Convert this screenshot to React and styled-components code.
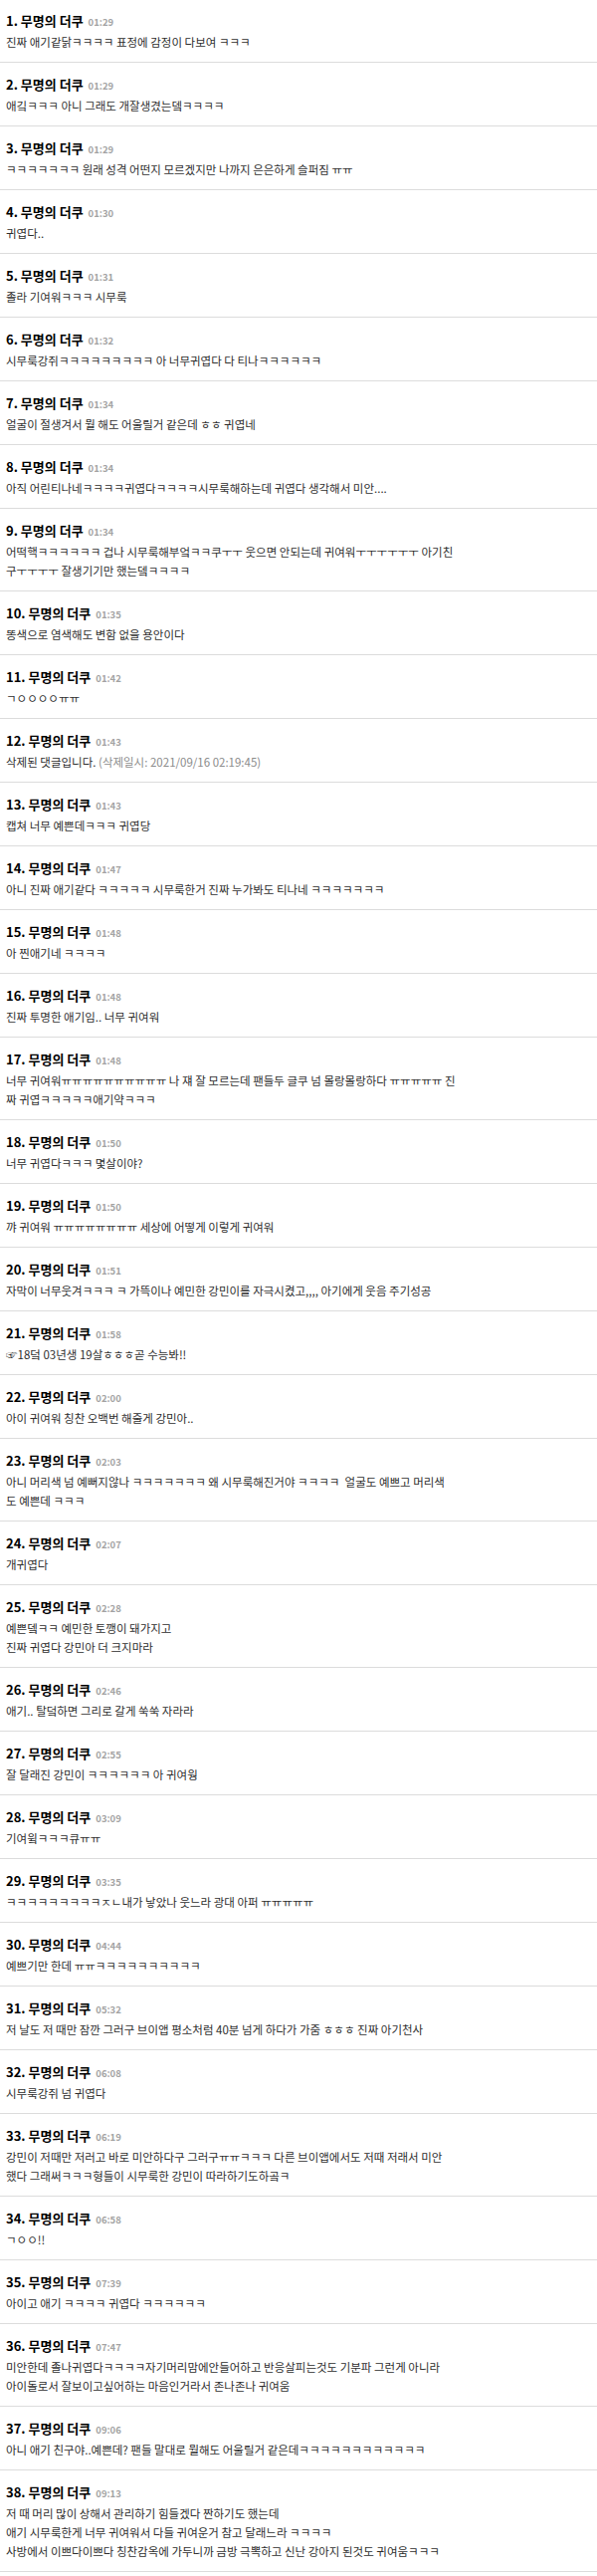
import React from 'react';
import styled, { createGlobalStyle } from 'styled-components';

const GlobalStyle = createGlobalStyle`
    body {
        margin: 0;
        background: #fff;
        font-family: "Noto Sans CJK KR", "Noto Sans", sans-serif;
    }
`;

const CommentList = styled.ul`
    list-style: none;
    margin: 0;
    padding: 0;
`;

const CommentItem = styled.li`
    padding: 12px 6px 10px;
    border-bottom: 1px solid #dcdcdc;

    &:first-child {
        padding-top: 11px;
    }
`;

const CommentHeader = styled.div`
    display: flex;
    align-items: baseline;
    height: 20px;
    line-height: 20px;
`;

const Writer = styled.span`
    font-size: 13px;
    font-weight: 700;
    color: #000;
`;

const WrittenAt = styled.span`
    margin-left: 5px;
    font-size: 9.5px;
    font-weight: 700;
    color: #a3a3a3;
`;

const CommentBody = styled.div`
    margin-top: 2px;
    font-size: 11.5px;
    line-height: 19px;
    color: #2e2e2e;
    white-space: pre;
`;

const DeletedAt = styled.span`
    color: #8c8c8c;
`;

const comments = [
    { time: '01:29', lines: ['진짜 애기같닭ㅋㅋㅋㅋ 표정에 감정이 다보여 ㅋㅋㅋ'] },
    { time: '01:29', lines: ['애깈ㅋㅋㅋ 아니 그래도 개잘생겼는뎈ㅋㅋㅋㅋ'] },
    { time: '01:29', lines: ['ㅋㅋㅋㅋㅋㅋㅋ 원래 성격 어떤지 모르겠지만 나까지 은은하게 슬퍼짐 ㅠㅠ'] },
    { time: '01:30', lines: ['귀엽다..'] },
    { time: '01:31', lines: ['졸라 기여워ㅋㅋㅋ 시무룩'] },
    { time: '01:32', lines: ['시무룩강쥐ㅋㅋㅋㅋㅋㅋㅋㅋㅋ 아 너무귀엽다 다 티나ㅋㅋㅋㅋㅋㅋ'] },
    { time: '01:34', lines: ['얼굴이 절생겨서 뭘 해도 어울릴거 같은데 ㅎㅎ 귀엽네'] },
    { time: '01:34', lines: ['아직 어린티나네ㅋㅋㅋㅋ귀엽다ㅋㅋㅋㅋ시무룩해하는데 귀엽다 생각해서 미안....'] },
    { time: '01:34', lines: ['어떡핵ㅋㅋㅋㅋㅋㅋ 겁나 시무룩해부엌ㅋㅋ쿠ㅜㅜ 웃으면 안되는데 귀여워ㅜㅜㅜㅜㅜㅜ 아기친', '구ㅜㅜㅜㅜ 잘생기기만 했는뎈ㅋㅋㅋㅋ'] },
    { time: '01:35', lines: ['똥색으로 염색해도 변함 없을 용안이다'] },
    { time: '01:42', lines: ['ㄱㅇㅇㅇㅇㅠㅠ'] },
    { time: '01:43', deleted: '2021/09/16 02:19:45', lines: ['삭제된 댓글입니다.'] },
    { time: '01:43', lines: ['캡쳐 너무 예쁜데ㅋㅋㅋ 귀엽당'] },
    { time: '01:47', lines: ['아니 진짜 애기같다 ㅋㅋㅋㅋㅋ 시무룩한거 진짜 누가봐도 티나네 ㅋㅋㅋㅋㅋㅋㅋ'] },
    { time: '01:48', lines: ['아 찐애기네 ㅋㅋㅋㅋ'] },
    { time: '01:48', lines: ['진짜 투명한 애기임.. 너무 귀여워'] },
    { time: '01:48', lines: ['너무 귀여워ㅠㅠㅠㅠㅠㅠㅠㅠㅠㅠ 나 쟤 잘 모르는데 팬들두 글쿠 넘 몰랑몰랑하다 ㅠㅠㅠㅠㅠ 진', '짜 귀엽ㅋㅋㅋㅋㅋ애기약ㅋㅋㅋ'] },
    { time: '01:50', lines: ['너무 귀엽다ㅋㅋㅋ 몇살이야?'] },
    { time: '01:50', lines: ['꺄 귀여워 ㅠㅠㅠㅠㅠㅠㅠㅠ 세상에 어떻게 이렇게 귀여워'] },
    { time: '01:51', lines: ['자막이 너무웃겨ㅋㅋㅋ ㅋ 가뜩이나 예민한 강민이를 자극시켰고,,,, 아기에게 웃음 주기성공'] },
    { time: '01:58', lines: ['☞18덬 03년생 19살ㅎㅎㅎ곧 수능봐!!'] },
    { time: '02:00', lines: ['아이 귀여워 칭찬 오백번 해줄게 강민아..'] },
    { time: '02:03', lines: ['아니 머리색 넘 예뻐지않나 ㅋㅋㅋㅋㅋㅋㅋ 왜 시무룩해진거야 ㅋㅋㅋㅋ  얼굴도 예쁘고 머리색', '도 예쁜데 ㅋㅋㅋ'] },
    { time: '02:07', lines: ['개귀엽다'] },
    { time: '02:28', lines: ['예쁜뎈ㅋㅋ 예민한 토깽이 돼가지고', '진짜 귀엽다 강민아 더 크지마라'] },
    { time: '02:46', lines: ['애기.. 탈덬하면 그리로 갈게 쑥쑥 자라라'] },
    { time: '02:55', lines: ['잘 달래진 강민이 ㅋㅋㅋㅋㅋㅋ 아 귀여웡'] },
    { time: '03:09', lines: ['기여윜ㅋㅋㅋ큐ㅠㅠ'] },
    { time: '03:35', lines: ['ㅋㅋㅋㅋㅋㅋㅋㅋㅋㅈㄴ내가 낳았나 웃느라 광대 아퍼 ㅠㅠㅠㅠㅠ'] },
    { time: '04:44', lines: ['예쁘기만 한데 ㅠㅠㅋㅋㅋㅋㅋㅋㅋㅋㅋㅋ'] },
    { time: '05:32', lines: ['저 날도 저 때만 잠깐 그러구 브이앱 평소처럼 40분 넘게 하다가 가줌 ㅎㅎㅎ 진짜 아기천사'] },
    { time: '06:08', lines: ['시무룩강쥐 넘 귀엽다'] },
    { time: '06:19', lines: ['강민이 저때만 저러고 바로 미안하다구 그러구ㅠㅠㅋㅋㅋ 다른 브이앱에서도 저때 저래서 미안', '했다 그래써ㅋㅋㅋ형들이 시무룩한 강민이 따라하기도하곸ㅋ'] },
    { time: '06:58', lines: ['ㄱㅇㅇ!!'] },
    { time: '07:39', lines: ['아이고 애기 ㅋㅋㅋㅋ 귀엽다 ㅋㅋㅋㅋㅋㅋ'] },
    { time: '07:47', lines: ['미안한데 졸나귀엽다ㅋㅋㅋㅋ자기머리맘에안들어하고 반응살피는것도 기분파 그런게 아니라', '아이돌로서 잘보이고싶어하는 마음인거라서 존나존나 귀여움'] },
    { time: '09:06', lines: ['아니 애기 친구야..예쁜데? 팬들 말대로 뭘해도 어울릴거 같은데ㅋㅋㅋㅋㅋㅋㅋㅋㅋㅋㅋㅋ'] },
    { time: '09:13', lines: ['저 때 머리 많이 상해서 관리하기 힘들겠다 짠하기도 했는데', '애기 시무룩한게 너무 귀여워서 다들 귀여운거 참고 달래느라 ㅋㅋㅋㅋ', '사방에서 이쁘다이쁘다 칭찬감옥에 가두니까 금방 극뽁하고 신난 강아지 된것도 귀여움ㅋㅋㅋ'] },
];

const Comment = ({ index, comment }) => (
    <CommentItem>
        <CommentHeader>
            <Writer>{index}. 무명의 더쿠</Writer>
            <WrittenAt>{comment.time}</WrittenAt>
        </CommentHeader>
        <CommentBody>
            {comment.lines.map((line, i) => (
                <React.Fragment key={i}>
                    {i > 0 && <br />}
                    {line}
                </React.Fragment>
            ))}
            {comment.deleted && <DeletedAt> (삭제일시: {comment.deleted})</DeletedAt>}
        </CommentBody>
    </CommentItem>
);

const App = () => {
    return (
        <>
            <GlobalStyle />
            <CommentList>
                {comments.map((comment, i) => (
                    <Comment key={i} index={i + 1} comment={comment} />
                ))}
            </CommentList>
        </>
    );
};

export default App;
